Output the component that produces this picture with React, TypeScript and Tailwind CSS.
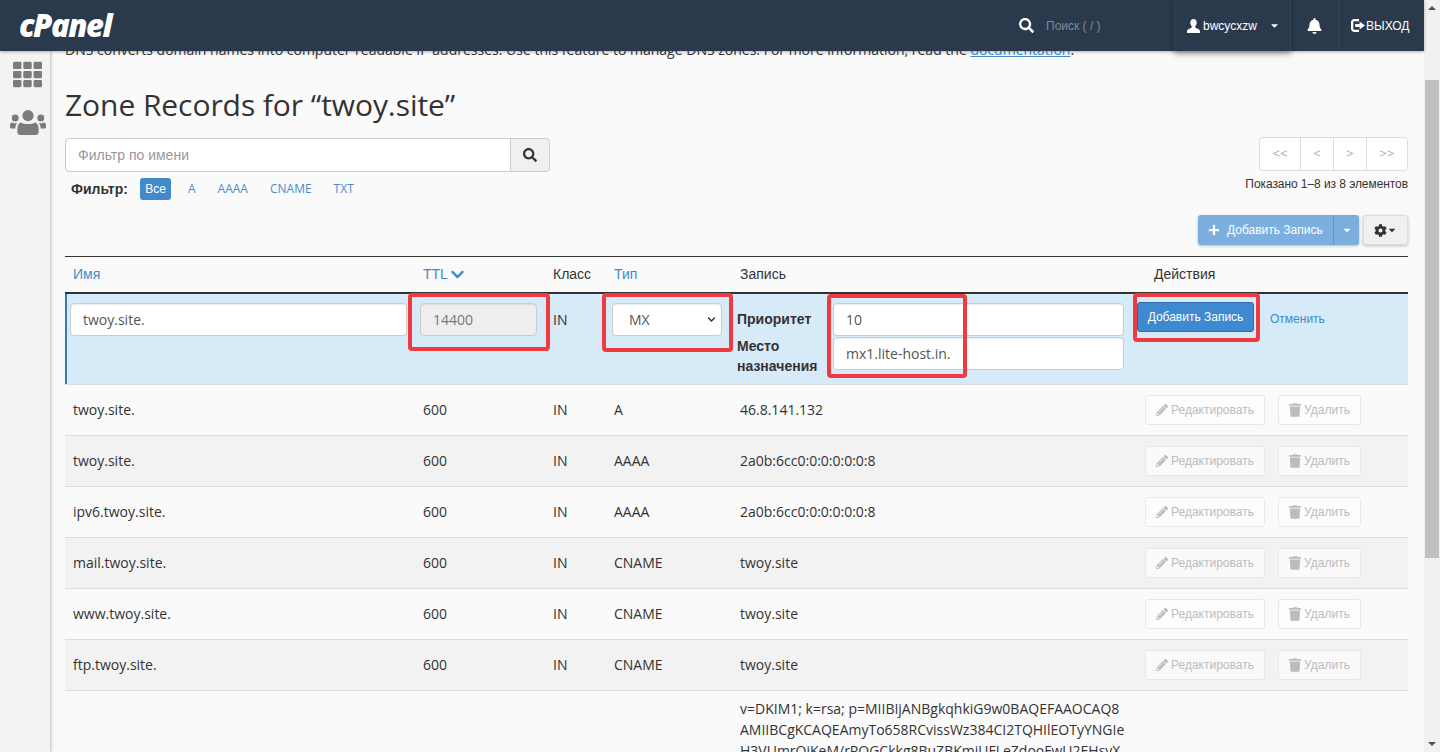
import React from 'react';
import { FaBell, FaCaretDown, FaChevronDown, FaCog, FaPencilAlt, FaPlus, FaSearch, FaTh, FaTrash } from 'react-icons/fa';

const records = [
    { name: 'twoy.site.', type: 'A', value: '46.8.141.132' },
    { name: 'twoy.site.', type: 'AAAA', value: '2a0b:6cc0:0:0:0:0:0:8' },
    { name: 'ipv6.twoy.site.', type: 'AAAA', value: '2a0b:6cc0:0:0:0:0:0:8' },
    { name: 'mail.twoy.site.', type: 'CNAME', value: 'twoy.site' },
    { name: 'www.twoy.site.', type: 'CNAME', value: 'twoy.site' },
    { name: 'ftp.twoy.site.', type: 'CNAME', value: 'twoy.site' },
];

const gridCols = 'grid grid-cols-[350px_130px_62px_125px_414px_262px]';
const cyr = "font-['Liberation_Sans',sans-serif]";
const inputCls = "h-[33px] border border-[#ccc] rounded-[4px] text-[14px] flex items-center px-3 shadow-[inset_0_1px_1px_rgba(0,0,0,0.075)]";

const Highlight = ({ className }: { className: string }) => (
    <div className={`absolute border-4 border-[#ee3b3f] rounded-[4px] pointer-events-none ${className}`} />
);

const UserIcon = () => (
    <svg className="w-[13px] h-[14px] mr-[3px]" viewBox="0 0 13 14" fill="currentColor">
        <path d="M6.5 0C8.6 0 9.7 1.5 9.7 3.6c0 1.7-.7 3.2-1.6 4 0 .8.3 1.2 1.3 1.600 1.600.6 3.600 1.300 3.600 3V14H0v-1.800c0-1.700 2-2.400 3.600-3 1-.4 1.300-.8 1.300-1.600-.9-.8-1.600-2.300-1.600-4C3.300 1.500 4.400 0 6.500 0z" />
    </svg>
);

const LogoutIcon = () => (
    <svg className="w-[14px] h-[13px] mr-[1px]" viewBox="0 0 14 13" fill="currentColor">
        <path d="M3.5 0H8v2.2H3.6c-.8 0-1.3.5-1.3 1.3v6c0 .8.5 1.3 1.3 1.3H8V13H3.5C1.4 13 0 11.6 0 9.5v-6C0 1.4 1.4 0 3.5 0z" />
        <path d="M8.6 2.6 14 6.5l-5.4 3.9V8H4.2V5h4.400z" />
    </svg>
);

const UsersIcon = () => (
    <svg className="w-[36px] h-[25px] mt-[21px] ml-[5px]" viewBox="0 0 36 25" fill="currentColor">
        <circle cx="18" cy="5.6" r="5.6" />
        <circle cx="5.2" cy="8" r="3.5" />
        <circle cx="30.8" cy="8" r="3.5" />
        <path d="M11 12.4c1.6 1.2 4.4 1.6 7 1.6s5.4-.4 7-1.6c2.3.5 3.6 2.7 3.6 6.2v3.6c0 1.8-1.2 2.8-3 2.8H10.4c-1.8 0-3-1-3-2.8v-3.6c0-3.5 1.3-5.7 3.6-6.2z" />
        <path d="M1.6 12.6c1.8.8 4.4 1 6 .2-1.5 1.2-2.2 3-2.3 5.6H1.5C.5 18.400 0 17.800 0 17v-1.800c0-1.200.6-2.100 1.600-2.600z" />
        <path d="M34.400 12.600c-1.800.8-4.400 1-6 .2 1.500 1.200 2.200 3 2.300 5.600h3.800c1 0 1.500-.6 1.500-1.400v-1.800c0-1.200-.6-2.100-1.600-2.600z" />
    </svg>
);

const Actions = () => (
    <div className={`flex items-center gap-[13px] -ml-[1px] ${cyr}`}>
        <span className="h-[30px] w-[120px] border border-[#e8e8e8] rounded-[3px] bg-white/60 flex items-center justify-center gap-[3px] text-[12px] text-[#bcbcbc]">
            <FaPencilAlt className="w-3 h-3" /> Редактировать
        </span>
        <span className="h-[30px] w-[83px] border border-[#e8e8e8] rounded-[3px] bg-white/60 flex items-center justify-center gap-[3px] text-[12px] text-[#bcbcbc]">
            <FaTrash className="w-[12px] h-[14px]" /> Удалить
        </span>
    </div>
);

const App = () => {
    return (
        <div className="w-[1440px] h-[752px] overflow-hidden flex font-['Open_Sans',sans-serif] text-[14px] text-[#333] bg-[#fafafa]">
            <div className="flex-1 flex flex-col min-w-0">
                {/* Top bar */}
                <header className="relative z-20 h-[51px] shrink-0 bg-[#2a3a4c] flex items-center text-white shadow-[0_1px_3px_rgba(0,0,0,0.3)]">
                    <span className="ml-[19px] text-[31px] leading-none font-extrabold italic tracking-[-1.5px]">cPanel</span>
                    <div className="ml-auto flex items-center h-full">
                        <FaSearch className="w-[15px] h-[15px]" />
                        <span className={`ml-[12px] w-[128px] text-[12px] text-[#7f8a96] ${cyr}`}>Поиск ( / )</span>
                        <div className={`h-full w-[117px] border-x border-[#33445a] flex items-center pl-[12px] text-[12px] shadow-[0_3px_6px_rgba(0,0,0,0.35)] ${cyr}`}>
                            <UserIcon />
                            bwcycxzw
                            <FaCaretDown className="w-[11px] h-[11px] ml-[12px]" />
                        </div>
                        <div className="h-full w-[48px] border-r border-[#33445a] flex items-center justify-center">
                            <FaBell className="w-[15px] h-[16px]" />
                        </div>
                        <div className={`h-full w-[85px] flex items-center pl-[12px] text-[12px] ${cyr}`}>
                            <LogoutIcon />
                            ВЫХОД
                        </div>
                    </div>
                </header>

                <div className="flex-1 flex min-h-0">
                    {/* Sidebar */}
                    <aside className="relative z-10 w-[50px] shrink-0 bg-[#f3f3f3] shadow-[1px_0_3px_rgba(0,0,0,0.25)] flex flex-col items-center text-[#7b7b7b]">
                        <FaTh className="w-[29px] h-[29px] mt-[9px] ml-[5px]" />
                        <UsersIcon />
                    </aside>

                    {/* Main */}
                    <main className="flex-1 min-w-0 overflow-hidden pl-[15px] pr-[16px]">
                        <p className="-mt-[11px] leading-[20px] whitespace-nowrap text-[#333]">
                            DNS converts domain names into computer-readable IP addresses. Use this feature to manage DNS zones. For more information, read the <span className="text-[#428bca] underline">documentation</span>.
                        </p>
                        <h1 className="mt-[25px] text-[30px] leading-[40px] tracking-[-0.07px] text-[#333]">Zone Records for “twoy.site”</h1>

                        {/* Toolbar */}
                        <div className="mt-[13px] flex justify-between items-start">
                            <div>
                                <div className="flex w-[485px] h-[34px]">
                                    <div className={`flex-1 bg-white border border-[#ccc] rounded-l-[4px] flex items-center pl-[12px] text-[#999] ${cyr}`}>Фильтр по имени</div>
                                    <div className="w-[40px] -ml-px bg-[#f0f0f0] border border-[#ccc] rounded-r-[4px] flex items-center justify-center text-[#333]">
                                        <FaSearch className="w-[14px] h-[14px]" />
                                    </div>
                                </div>
                                <div className="mt-[5px] flex items-center h-[24px] pl-[6px] text-[12px] text-[#4a8bd0]">
                                    <span className={`font-bold text-[14px] text-[#333] w-[69px] ${cyr}`}>Фильтр:</span>
                                    <span className={`w-[31px] h-[22px] bg-[#428bca] text-white rounded-[3px] flex items-center justify-center ${cyr}`}>Все</span>
                                    <span className="ml-[17px]">A</span>
                                    <span className="ml-[22px]">AAAA</span>
                                    <span className="ml-[22px]">CNAME</span>
                                    <span className="ml-[22px]">TXT</span>
                                </div>
                            </div>
                            <div className="flex flex-col items-end">
                                <div className="flex h-[34px] -mt-px bg-white border border-[#ddd] rounded-[4px] text-[13px] text-[#aaa] divide-x divide-[#ddd]">
                                    <span className="w-[41px] flex items-center justify-center">&lt;&lt;</span>
                                    <span className="w-[33px] flex items-center justify-center">&lt;</span>
                                    <span className="w-[33px] flex items-center justify-center">&gt;</span>
                                    <span className="w-[40px] flex items-center justify-center">&gt;&gt;</span>
                                </div>
                                <div className={`mt-[6px] text-[12px] text-[#333] leading-[14px] tracking-[-0.07px] ${cyr}`}>Показано 1–8 из 8 элементов</div>
                            </div>
                        </div>

                        <div className="mt-[14px] flex justify-end gap-[4px]">
                            <div className={`flex h-[30px] rounded-[3px] bg-[#7cafdd] text-white text-[12px] shadow-[0_1px_3px_rgba(0,0,0,0.25)] ${cyr}`}>
                                <span className="w-[135px] flex items-center pl-[10px] gap-[7px]"><FaPlus className="w-[12px] h-[12px]" /> Добавить Запись</span>
                                <span className="w-[26px] border-l border-[#5d95c8] flex items-center justify-center"><FaCaretDown className="w-[10px] h-[10px]" /></span>
                            </div>
                            <div className="w-[45px] h-[30px] rounded-[3px] bg-[#f0f0f0] border border-[#ddd] shadow-[0_1px_3px_rgba(0,0,0,0.25)] flex items-center justify-center text-[#333]">
                                <FaCog className="w-[13px] h-[13px]" />
                                <FaCaretDown className="w-[10px] h-[10px]" />
                            </div>
                        </div>

                        {/* Records table */}
                        <div className="mt-[11px]">
                            <div className={`${gridCols} h-[38px] border-t border-[#333] border-b-2 border-b-[#333] items-center ${cyr}`}>
                                <span className="pl-[8px] text-[#428bca]">Имя</span>
                                <span className="pl-[8px] text-[#428bca] flex items-center gap-[3px]">TTL <FaChevronDown className="w-[13px] h-[15px]" /></span>
                                <span className="pl-[8px]">Класс</span>
                                <span className="pl-[7px] text-[#428bca]">Тип</span>
                                <span className="pl-[8px]">Запись</span>
                                <span className="pl-[8px]">Действия</span>
                            </div>

                            {/* Row being added */}
                            <div className={`${gridCols} relative h-[91px] bg-[#d6eaf8] border-b border-[#ddd] pt-[9px]`}>
                                <div className="absolute left-0 top-0 bottom-0 w-[2px] bg-[#337ab7]" />
                                <div className="pl-[5px] pr-[8px]"><div className={`${inputCls} bg-white text-[#555]`}>twoy.site.</div></div>
                                <div className="pl-[5px] pr-[8px]"><div className={`${inputCls} bg-[#eee] text-[#777]`}>14400</div></div>
                                <div className="pl-[8px] pt-[6px]">IN</div>
                                <div className="pl-[5px] pr-[10px]">
                                    <div className={`${inputCls} bg-white text-[#555] justify-between !pl-[16px] pr-[5px]`}>MX <FaChevronDown className="w-[9px] h-[9px] text-[#333]" /></div>
                                </div>
                                <div className="flex pl-[5px]">
                                    <div className={`w-[96px] font-bold text-[#333] ${cyr}`}>
                                        <div className="leading-[20px] pt-[6px]">Приоритет</div>
                                        <div className="leading-[20px] mt-[7px]">Место назначения</div>
                                    </div>
                                    <div className="w-[291px] flex flex-col gap-[1px]">
                                        <div className={`${inputCls} bg-white text-[#555]`}>10</div>
                                        <div className={`${inputCls} bg-white text-[#555]`}>mx1.lite-host.in.</div>
                                    </div>
                                </div>
                                <div className={`flex items-start -ml-[9px] ${cyr}`}>
                                    <span className="w-[117px] h-[30px] -mt-px bg-[#3d8ad1] border border-[#2e6da4] rounded-[3px] text-white text-[12px] flex items-center justify-center">Добавить Запись</span>
                                    <span className="ml-[16px] mt-[7px] text-[12px] text-[#428bca]">Отменить</span>
                                </div>
                                <Highlight className="left-[343px] top-[-1px] w-[142px] h-[58px]" />
                                <Highlight className="left-[537px] top-[-1px] w-[131px] h-[59px]" />
                                <Highlight className="left-[762px] top-0 w-[140px] h-[84px]" />
                                <Highlight className="left-[1068px] top-[-1px] w-[127px] h-[49px]" />
                            </div>

                            {records.map((r, i) => (
                                <div key={i} className={`${gridCols} h-[51px] items-center border-b border-[#ddd] ${i % 2 === 1 ? 'bg-[#f2f2f2]' : 'bg-[#fafafa]'}`}>
                                    <span className="pl-[8px] -mt-[2px]">{r.name}</span>
                                    <span className="pl-[8px] -mt-[2px]">600</span>
                                    <span className="pl-[8px] -mt-[2px]">IN</span>
                                    <span className="pl-[7px] -mt-[2px]">{r.type}</span>
                                    <span className="pl-[8px] -mt-[2px]">{r.value}</span>
                                    <Actions />
                                </div>
                            ))}

                            <div className={`${gridCols} pt-[7px]`}>
                                <span /><span /><span /><span />
                                <div className="pl-[8px] leading-[21px] whitespace-nowrap">
                                    v=DKIM1; k=rsa; p=MIIBIjANBgkqhkiG9w0BAQEFAAOCAQ8<br />
                                    AMIIBCgKCAQEAmyTo658RCvissWz384CI2TQHIlEOTyYNGIe<br />
                                    H3VUmrOiKeM/rPOGCkkg8BuZBKmiUFLeZdooFwU2EHsyX
                                </div>
                            </div>
                        </div>
                    </main>
                </div>
            </div>

            {/* Browser scrollbar */}
            <div className="w-[16px] shrink-0 bg-[#f1f1f1] flex flex-col items-center relative">
                <div className="mt-[6px] w-0 h-0 border-x-[4px] border-x-transparent border-b-[4px] border-b-[#505050]" />
                <div className="mt-[70px] w-[14px] h-[478px] bg-[#c1c1c1]" />
                <div className="mt-auto mb-[6px] w-0 h-0 border-x-[4px] border-x-transparent border-t-[4px] border-t-[#505050]" />
            </div>
        </div>
    );
};

export default App;
